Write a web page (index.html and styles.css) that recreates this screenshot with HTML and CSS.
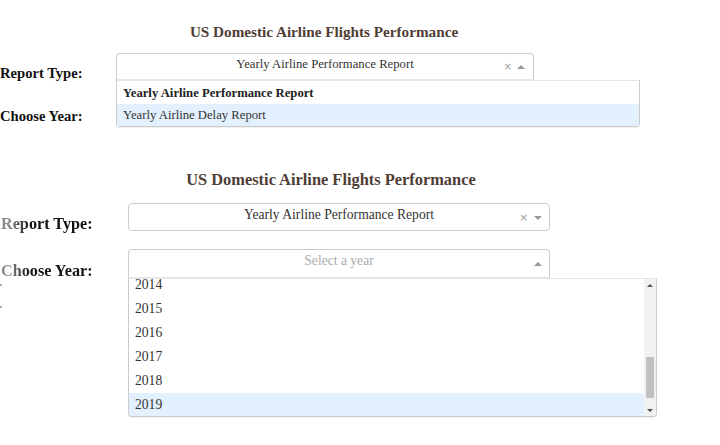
FILE: index.html
```html
<!DOCTYPE html>
<html>
<head>
<meta charset="utf-8">
<link rel="stylesheet" href="styles.css">
</head>
<body>
<div class="panel p1">
  <h1 class="title">US Domestic Airline Flights Performance</h1>
  <div class="form">
    <div class="row">
      <div class="label">Report Type:</div>
      <div class="dd">
        <div class="control open">
          <span class="value">Yearly Airline Performance Report</span>
          <span class="icons"><span class="clear">×</span><span class="arrow up"></span></span>
        </div>
        <div class="menu">
          <div class="opt sel">Yearly Airline Performance Report</div>
          <div class="opt focus">Yearly Airline Delay Report</div>
        </div>
      </div>
    </div>
    <div class="row row2">
      <div class="label">Choose Year:</div>
      <div class="dd">
        <div class="control">
          <span class="value placeholder">Select a year</span>
          <span class="icons"><span class="arrow down"></span></span>
        </div>
      </div>
    </div>
  </div>
</div>

<div class="panel p2">
  <h1 class="title">US Domestic Airline Flights Performance</h1>
  <div class="form">
    <div class="row">
      <div class="labelcol"><div class="label fade">Report Type:</div></div>
      <div class="dd">
        <div class="control">
          <span class="value">Yearly Airline Performance Report</span>
          <span class="icons"><span class="clear">×</span><span class="arrow down"></span></span>
        </div>
      </div>
    </div>
    <div class="row row2">
      <div class="labelcol">
        <div class="label fade">Choose Year:</div>
        <div class="tick t1"></div>
        <div class="tick t2"></div>
      </div>
      <div class="dd">
        <div class="control open">
          <span class="value placeholder">Select a year</span>
          <span class="icons"><span class="arrow up"></span></span>
        </div>
        <div class="menu">
          <div class="list">
            <div class="list-inner">
              <div class="opt">2014</div>
              <div class="opt">2015</div>
              <div class="opt">2016</div>
              <div class="opt">2017</div>
              <div class="opt">2018</div>
              <div class="opt focus">2019</div>
            </div>
          </div>
          <div class="scrollbar">
            <div class="sb-btn"><span class="sb-up"></span></div>
            <div class="sb-track"><div class="sb-thumb"></div></div>
            <div class="sb-btn"><span class="sb-down"></span></div>
          </div>
        </div>
      </div>
    </div>
  </div>
</div>
</body>
</html>
```
FILE: styles.css
```css
* { box-sizing: border-box; }
html, body { margin: 0; padding: 0; }
body {
  width: 720px;
  height: 445px;
  overflow: hidden;
  background: #fff;
  color: #111;
  font-family: "Liberation Serif", "Times New Roman", serif;
}
.panel { position: relative; }
.title {
  margin: 0;
  font-weight: bold;
  color: #503d36;
  text-align: center;
}
.row { display: flex; align-items: flex-start; }
.label { font-weight: bold; color: #111; white-space: nowrap; }
.dd { position: relative; }
.control {
  display: flex;
  align-items: flex-start;
  border: 1px solid #ccc;
  border-radius: 4px;
  background: #fff;
  color: #333;
}
.control.open {
  border-bottom-left-radius: 0;
  border-bottom-right-radius: 0;
  border-bottom-color: #e6e6e6;
}
.value {
  flex: 1;
  text-align: center;
  white-space: nowrap;
}
.placeholder { color: #aaa; }
.icons {
  display: flex;
  align-items: center;
  justify-content: flex-end;
  gap: 6px;
  align-self: center;
  padding-right: 7px;
}
.clear { color: #a0a0a0; font-family: "DejaVu Sans", sans-serif; line-height: 1; }
.arrow { width: 0; height: 0; border-style: solid; }
.arrow.down { border-width: 4px 4px 0; border-color: #999 transparent transparent; }
.arrow.up { border-width: 0 4px 4px; border-color: transparent transparent #999; }
.menu {
  position: absolute;
  top: 100%;
  left: 0;
  background: #fff;
  border: 1px solid #ccc;
  border-top-color: #e6e6e6;
  border-radius: 0 0 4px 4px;
  box-shadow: 0 1px 0 rgba(0, 0, 0, 0.06);
  z-index: 2;
}
.opt { color: #333; padding: 0 6px; white-space: nowrap; }
.opt.sel { font-weight: bold; color: #222; }
.opt.focus { background: #e3f0fd; }

/* ---------- panel 1 (smaller) ---------- */
.p1 { height: 140px; }
.p1 .title {
  width: 648px;
  padding-top: 23px;
  font-size: 15.2px;
  line-height: 18px;
}
.p1 .form { margin-top: 12px; }
.p1 .row2 { margin-top: 14px; }
.p1 .label {
  width: 116px;
  font-size: 14.6px;
  line-height: 18px;
  padding-top: 11px;
}
.p1 .dd { width: 418px; }
.p1 .control { height: 27px; font-size: 12.7px; }
.p1 .value { line-height: 16px; padding: 2px 0 0 30px; }
.p1 .icons { width: 30px; padding-right: 8px; gap: 5px; margin-top: 1px; }
.p1 .clear { font-size: 10px; }
.p1 .menu { width: 524px; height: 47px; padding-top: 1px; }
.p1 .opt { height: 22px; line-height: 22px; font-size: 12.7px; }

/* ---------- panel 2 ---------- */
.p2 { height: 305px; }
.p2 .title {
  width: 662px;
  padding-top: 30px;
  font-size: 16.4px;
  line-height: 20px;
}
.p2 .form { margin-top: 13px; }
.p2 .row2 { margin-top: 15px; }
.p2 .labelcol { width: 128px; }
.p2 .label {
  font-size: 16.2px;
  line-height: 20px;
  padding-top: 11px;
  padding-left: 1px;
}
.p2 .row2 .label { padding-top: 12px; }
.label.fade {
  background: linear-gradient(90deg, #8a8a8a 0px, #8a8a8a 9px, #111 30px, #111 100%);
  -webkit-background-clip: text;
  background-clip: text;
  color: transparent;
}
.tick { width: 2px; height: 2px; background: #aaa; }
.tick.t1 { margin-top: 3px; }
.tick.t2 { margin-top: 20px; }
.p2 .dd { width: 422px; }
.p2 .control { height: 28px; font-size: 13.6px; }
.p2 .row2 .control { height: 29px; }
.p2 .value { line-height: 17px; padding: 2px 0 0 32px; }
.p2 .icons { width: 32px; margin-top: 1px; }
.p2 .clear { font-size: 10.5px; }
.p2 .menu {
  width: 529px;
  height: 139px;
  display: flex;
  overflow: hidden;
}
.list { flex: 1; overflow: hidden; }
.list-inner { margin-top: -6px; }
.p2 .opt { height: 24px; line-height: 24px; font-size: 13.6px; }
.scrollbar {
  width: 12px;
  display: flex;
  flex-direction: column;
  background: #f1f1f1;
}
.sb-btn {
  height: 12px;
  display: flex;
  align-items: center;
  justify-content: center;
}
.sb-up, .sb-down { width: 0; height: 0; border-style: solid; }
.sb-up { border-width: 0 3px 3px; border-color: transparent transparent #505050; }
.sb-down { border-width: 3px 3px 0; border-color: #505050 transparent transparent; }
.sb-track { flex: 1; padding: 66px 2px 0; }
.sb-thumb { height: 41px; background: #c1c1c1; }
```
